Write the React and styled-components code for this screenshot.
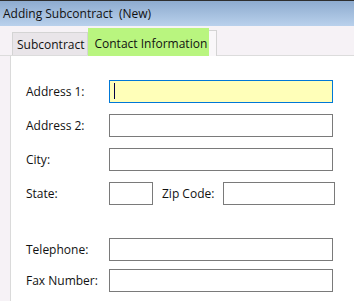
import styled, { createGlobalStyle } from "styled-components";

const GlobalStyle = createGlobalStyle`
	html, body {
		margin: 0;
		padding: 0;
		background: #ffffff;
	}
	body {
		font-family: "Open Sans", "Noto Sans", sans-serif;
		font-size: 12px;
		color: #111;
	}
`;

const rows = [
	{ label: "Address 1:", active: true, gap: 0 },
	{ label: "Address 2:", gap: 11 },
	{ label: "City:", gap: 11 },
];

const bottomRows = [
	{ label: "Telephone:", gap: 33 },
	{ label: "Fax Number:", gap: 8 },
];

const App = () => {
	return (
		<>
			<GlobalStyle />
			<Window>
				<TitleBar>Adding Subcontract&nbsp; (New)</TitleBar>
				<TabStrip>
					<Tab>Subcontract</Tab>
					<Tab active>
						<Highlight>Contact Information</Highlight>
					</Tab>
				</TabStrip>
				<Body>
					<Gutter />
					<Panel>
						{rows.map((r) => (
							<Row key={r.label} gap={r.gap}>
								<Label>{r.label}</Label>
								<Field active={r.active} width={224}>
									{r.active && <Caret />}
								</Field>
							</Row>
						))}
						<Row gap={11}>
							<Label>State:</Label>
							<Field width={44} />
							<InlineLabel>Zip Code:</InlineLabel>
							<Field width={112} />
						</Row>
						{bottomRows.map((r) => (
							<Row key={r.label} gap={r.gap}>
								<Label>{r.label}</Label>
								<Field width={224} />
							</Row>
						))}
					</Panel>
				</Body>
			</Window>
		</>
	);
};

const Window = styled.div`
	width: 354px;
	height: 301px;
	overflow: hidden;
	display: flex;
	flex-direction: column;
	border-top: 1px solid #2e2e2e;
	box-sizing: border-box;
`;

const TitleBar = styled.div`
	height: 25px;
	flex-shrink: 0;
	display: flex;
	align-items: center;
	padding-left: 3px;
	background: linear-gradient(#8eabcf, #b9d1ec);
	color: #111;
	white-space: pre;
`;

const TabStrip = styled.div`
	height: 30px;
	flex-shrink: 0;
	display: flex;
	align-items: flex-end;
	padding-left: 12px;
	background: #f6f2f6;
	border-bottom: 1px solid #dcdcdc;
	box-sizing: border-box;
`;

const Tab = styled.div`
	display: flex;
	align-items: center;
	box-sizing: border-box;
	height: ${(props) => (props.active ? "26px" : "23px")};
	padding: ${(props) => (props.active ? "0 7px 0 0" : "0 3px 0 4px")};
	background: ${(props) => (props.active ? "#f9f7f9" : "#e9e5e9")};
	border: 1px solid #d4d4d4;
	border-bottom: none;
	margin-bottom: ${(props) => (props.active ? "-1px" : "0")};
	border-left: ${(props) => (props.active ? "none" : "1px solid #d4d4d4")};
`;

const Highlight = styled.span`
	display: flex;
	align-items: center;
	align-self: stretch;
	margin: -3px 0 -3px 0;
	padding: 0 2px 0 6px;
	background: #b9f57f;
`;

const Body = styled.div`
	flex: 1;
	display: flex;
`;

const Gutter = styled.div`
	width: 10px;
	background: #f6f2f6;
	border-right: 1px solid #dadada;
`;

const Panel = styled.div`
	flex: 1;
	background: #ffffff;
	display: flex;
	flex-direction: column;
	padding: 24px 0 0 15px;
`;

const Row = styled.div`
	display: flex;
	align-items: center;
	height: 23px;
	margin-top: ${(props) => props.gap}px;
`;

const Label = styled.div`
	width: 83px;
	flex-shrink: 0;
`;

const InlineLabel = styled.div`
	width: 61px;
	padding-left: 9px;
	flex-shrink: 0;
`;

const Field = styled.div`
	position: relative;
	box-sizing: border-box;
	width: ${(props) => props.width}px;
	height: 23px;
	border: 1px solid ${(props) => (props.active ? "#0078d7" : "#7a7a7a")};
	background: ${(props) => (props.active ? "#ffffb9" : "#ffffff")};
`;

const Caret = styled.span`
	position: absolute;
	left: 4px;
	top: 2px;
	width: 1px;
	height: 16px;
	background: #000044;
`;

export default App;
